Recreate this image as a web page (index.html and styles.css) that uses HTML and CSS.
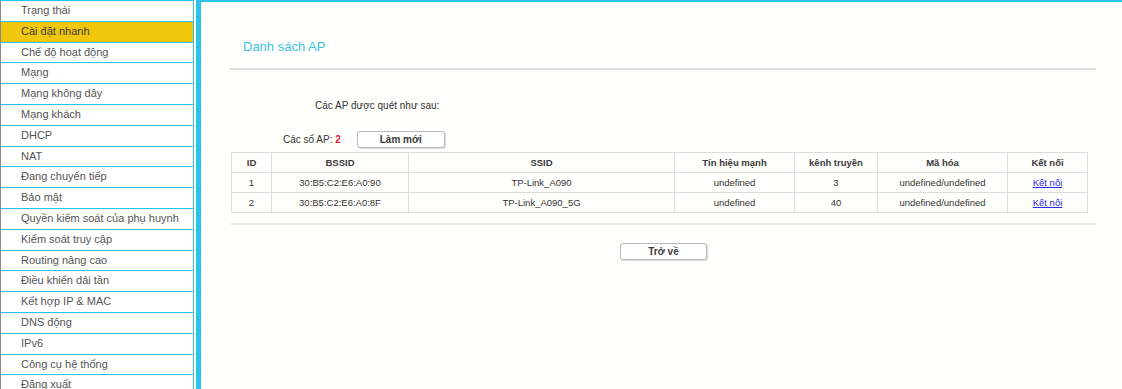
FILE: index.html
```html
<!DOCTYPE html>
<html>
<head>
    <meta charset="utf-8">
    <title>Danh sách AP</title>
    <link rel="stylesheet" href="styles.css">
</head>
<body>
    <div class="page">
        <!-- menu bên trái -->
        <div class="sidebar">
            <ul class="menu">
                <li>Trạng thái</li>
                <li class="active">Cài đặt nhanh</li>
                <li>Chế độ hoạt động</li>
                <li>Mạng</li>
                <li>Mạng không dây</li>
                <li>Mạng khách</li>
                <li>DHCP</li>
                <li>NAT</li>
                <li>Đang chuyển tiếp</li>
                <li>Bảo mật</li>
                <li>Quyền kiểm soát của phụ huynh</li>
                <li>Kiểm soát truy cập</li>
                <li>Routing nâng cao</li>
                <li>Điều khiển dải tần</li>
                <li>Kết hợp IP &amp; MAC</li>
                <li>DNS động</li>
                <li>IPv6</li>
                <li>Công cụ hệ thống</li>
                <li>Đăng xuất</li>
            </ul>
        </div>

        <!-- nội dung -->
        <div class="main">
            <div class="title">Danh sách AP</div>
            <div class="divider"></div>
            <div class="note">Các AP được quét như sau:</div>
            <div class="count-row">
                <span class="count">Các số AP: <b class="num">2</b></span>
                <button class="btn btn-refresh">Làm mới</button>
            </div>
            <table class="ap-table">
                <colgroup>
                    <col style="width:40px">
                    <col style="width:137px">
                    <col style="width:266px">
                    <col style="width:120px">
                    <col style="width:83px">
                    <col style="width:130px">
                    <col style="width:80px">
                </colgroup>
                <tr>
                    <th>ID</th>
                    <th>BSSID</th>
                    <th>SSID</th>
                    <th>Tín hiệu mạnh</th>
                    <th>kênh truyền</th>
                    <th>Mã hóa</th>
                    <th>Kết nối</th>
                </tr>
                <tr>
                    <td>1</td>
                    <td>30:B5:C2:E6:A0:90</td>
                    <td>TP-Link_A090</td>
                    <td>undefined</td>
                    <td>3</td>
                    <td>undefined/undefined</td>
                    <td><a href="#">Kết nối</a></td>
                </tr>
                <tr>
                    <td>2</td>
                    <td>30:B5:C2:E6:A0:8F</td>
                    <td>TP-Link_A090_5G</td>
                    <td>undefined</td>
                    <td>40</td>
                    <td>undefined/undefined</td>
                    <td><a href="#">Kết nối</a></td>
                </tr>
            </table>
            <div class="divider bottom"></div>
            <div class="back-row">
                <button class="btn btn-back">Trở về</button>
            </div>
        </div>
    </div>
</body>
</html>
```

FILE: styles.css
```css
html, body {
    margin: 0;
    padding: 0;
    height: 389px;
    overflow: hidden;
    background: #fffffd;
    font-family: "Liberation Sans", Arial, sans-serif;
}
.page {
    display: flex;
    height: 389px;
}
.sidebar {
    width: 194px;
    padding-right: 2px;
    border-right: 5px solid #2bc4e8;
    background: #fff;
}
.menu {
    list-style: none;
    margin: 0;
    padding: 0;
    border-left: 1px solid #8a8a8a;
    border-right: 1px solid #2bc4e8;
    border-top: 1px solid #2bc4e8;
    height: 100%;
    box-sizing: border-box;
}
.menu li {
    height: 19.8px;
    line-height: 19.8px;
    border-bottom: 1px solid #2bc4e8;
    padding-left: 20px;
    font-size: 11px;
    color: #555;
    white-space: nowrap;
}
.menu li.active {
    background: #f0c70a;
    color: #3a3a3a;
}
.main {
    flex: 1;
    border-top: 2px solid #2bc4e8;
    background: #fffffd;
    display: flex;
    flex-direction: column;
}
.title {
    margin: 37px 0 0 42px;
    font-size: 13px;
    line-height: 16px;
    color: #3cc3e2;
}
.divider {
    height: 2px;
    background: #dedede;
    margin: 13px 26px 0 29px;
}
.divider.bottom {
    margin: 10px 26px 0 30px;
    background: #e6e6e6;
}
.note {
    margin: 30px 0 0 114px;
    font-size: 10px;
    line-height: 12px;
    color: #333;
}
.count-row {
    display: flex;
    align-items: center;
    gap: 16px;
    margin: 19px 0 0 82px;
    height: 17px;
}
.count {
    font-size: 10px;
    color: #333;
}
.num {
    color: #e8202a;
}
.btn {
    height: 17px;
    background: #fff;
    border: 1px solid #b8b8b8;
    border-radius: 3px;
    box-shadow: 1px 1px 1px rgba(0,0,0,0.15);
    font-family: "Liberation Sans", Arial, sans-serif;
    font-size: 10px;
    font-weight: bold;
    color: #3a3a3a;
    padding: 0;
}
.btn-refresh {
    width: 88px;
}
.ap-table {
    margin: 4px 0 0 30px;
    width: 856px;
    border-collapse: collapse;
    table-layout: fixed;
    font-size: 9.5px;
    color: #333;
}
.ap-table th,
.ap-table td {
    border: 1px solid #dcdcdc;
    height: 19px;
    padding: 0;
    text-align: center;
}
.ap-table th {
    font-weight: bold;
    color: #3a3a3a;
}
.ap-table a {
    color: #2a2ae6;
}
.back-row {
    display: flex;
    justify-content: center;
    margin: 18px 26px 0 30px;
}
.btn-back {
    width: 87px;
}
```
